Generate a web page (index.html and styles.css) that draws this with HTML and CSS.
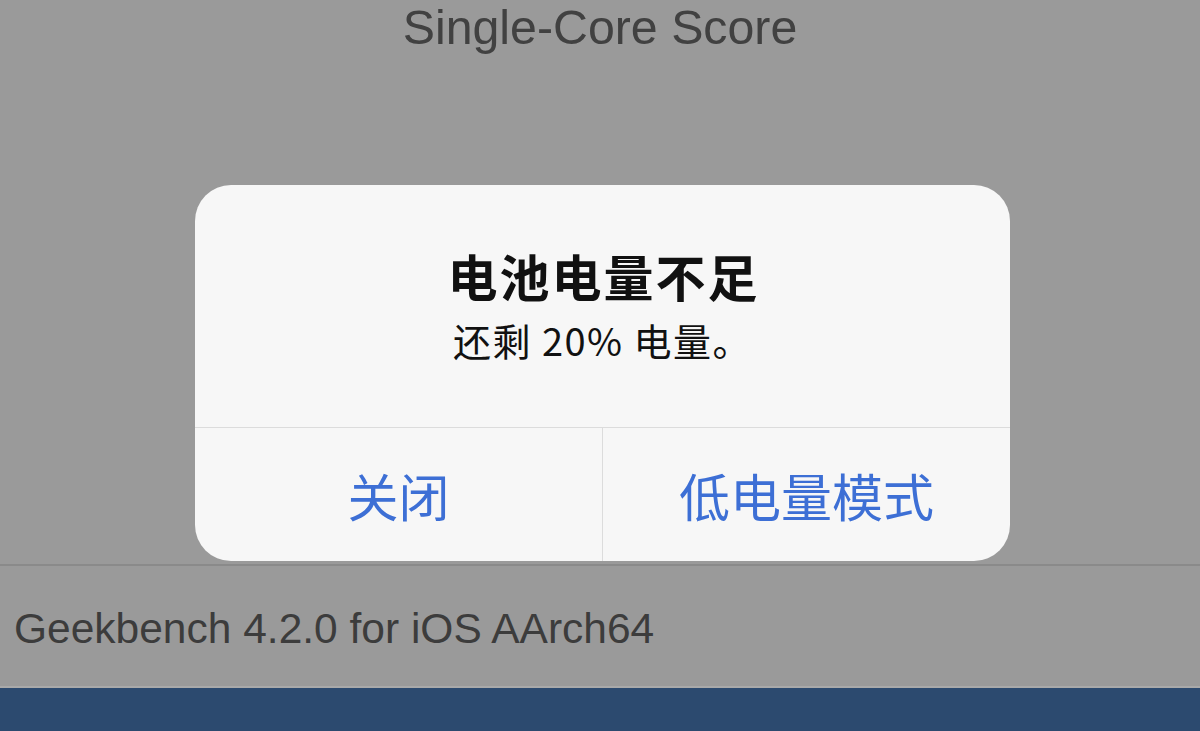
FILE: index.html
```html
<!DOCTYPE html>
<html lang="zh-CN">
  <head>
    <meta charset="UTF-8">
    <title>Geekbench</title>
    <link rel="stylesheet" href="styles.css">
  </head>
  <body>
    <div class="screen">
      <div class="score">
        <h1 class="score-title">Single-Core Score</h1>
      </div>
      <div class="info-row">Geekbench 4.2.0 for iOS AArch64</div>
      <div class="tabbar"></div>
    </div>

    <!-- 低电量提醒 -->
    <div class="alert">
      <div class="alert-body">
        <div class="alert-title">电池电量不足</div>
        <div class="alert-msg">还剩 20% 电量。</div>
      </div>
      <div class="alert-actions">
        <a href="javascript:;" class="alert-btn">关闭</a>
        <a href="javascript:;" class="alert-btn">低电量模式</a>
      </div>
    </div>
  </body>
</html>
```

FILE: styles.css
```css
html, body {
  margin: 0;
  padding: 0;
  height: 100%;
}
body {
  background: #9a9a9a;
  font-family: "Liberation Sans", Arial, "Noto Sans CJK SC", sans-serif;
  color: #3e3e3e;
  overflow: hidden;
  position: relative;
}
.screen {
  display: flex;
  flex-direction: column;
  height: 731px;
}
.score {
  height: 564px;
  text-align: center;
}
.score-title {
  margin: 0;
  font-size: 48.3px;
  font-weight: normal;
  line-height: 55px;
  color: #414141;
}
.info-row {
  border-top: 2px solid #8a8a8a;
  border-bottom: 2px solid #a9a9a9;
  padding: 39px 14px 33px;
  font-size: 42.5px;
  line-height: 48px;
  color: #3c3c3c;
}
.tabbar {
  flex: 1;
  background: #2c4a6f;
}

/* 弹窗 */
.alert {
  position: absolute;
  left: 195px;
  top: 185px;
  width: 815px;
  height: 376px;
  background: #f7f7f7;
  border-radius: 36px;
  display: flex;
  flex-direction: column;
  overflow: hidden;
  font-family: "Noto Sans CJK SC", sans-serif;
}
.alert-body {
  height: 242px;
  display: flex;
  flex-direction: column;
  align-items: center;
  padding-top: 60px;
  box-sizing: border-box;
  color: #111;
}
.alert-title {
  font-size: 50px;
  font-weight: bold;
  line-height: 60px;
  letter-spacing: 2px;
  padding-left: 2px;
}
.alert-msg {
  margin-top: 12px;
  font-size: 38px;
  line-height: 46px;
  letter-spacing: 1.5px;
}
.alert-actions {
  flex: 1;
  display: flex;
  border-top: 1px solid #dcdcdc;
}
.alert-btn {
  flex: 1;
  display: flex;
  align-items: center;
  justify-content: center;
  font-size: 51px;
  color: #3d6fd5;
  text-decoration: none;
}
.alert-btn + .alert-btn {
  border-left: 1px solid #dcdcdc;
}
```
